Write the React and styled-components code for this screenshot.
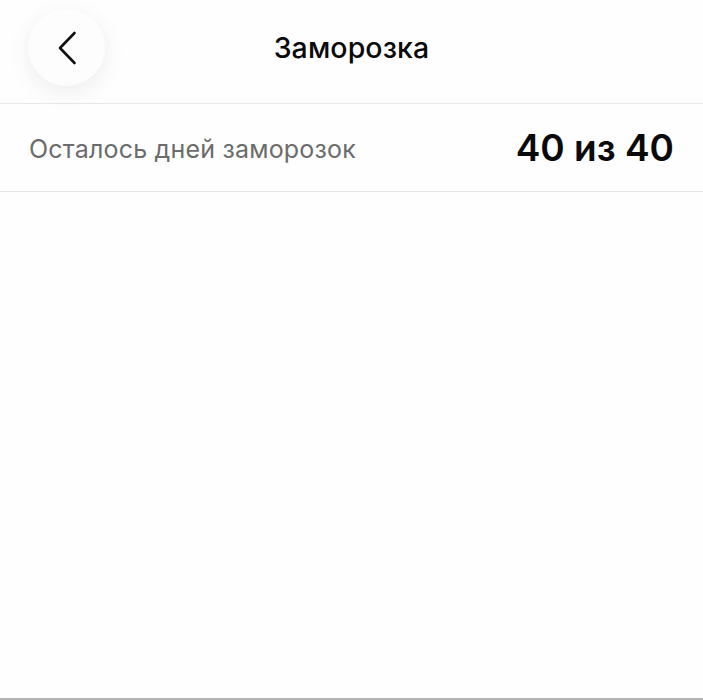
import React from 'react';
import styled, {createGlobalStyle} from 'styled-components';

const Global = createGlobalStyle`
    html, body {
        margin: 0;
        padding: 0;
        background: #fefefe;
    }
    body {
        font-family: Inter, "Noto Sans", Roboto, sans-serif;
        -webkit-font-smoothing: antialiased;
    }
`;

const Page = styled.div`
    height: 700px;
    box-sizing: border-box;
    border-bottom: 2px solid #b4b4b4;
    display: flex;
    flex-direction: column;
`;

const Header = styled.div`
    height: 104px;
    box-sizing: border-box;
    border-bottom: 1.5px solid #e8e8e8;
    display: grid;
    grid-template-columns: 1fr auto 1fr;
    align-items: center;
    padding: 0 28px;
    padding-bottom: 8px;
`;

const BackButton = styled.button`
    width: 77px;
    height: 77px;
    border-radius: 50%;
    border: none;
    background: #fdfdfd;
    box-shadow: 0 6px 24px rgba(0, 0, 0, 0.07);
    display: flex;
    align-items: center;
    justify-content: center;
    padding: 0;
    cursor: pointer;
    justify-self: start;
`;

const Title = styled.div`
    font-size: 28.5px;
    font-weight: 500;
    color: #0a0a0a;
    letter-spacing: 0.1px;
`;

const Row = styled.div`
    height: 88px;
    box-sizing: border-box;
    border-bottom: 1.5px solid #e6e6e6;
    display: flex;
    align-items: center;
    justify-content: space-between;
    padding: 0 29px;
`;

const Label = styled.div`
    font-size: 25px;
    color: #6b6b6b;
    letter-spacing: 0.2px;
    margin-top: 2px;
`;

const Value = styled.div`
    font-size: 37px;
    font-weight: 600;
    color: #0a0a0a;
`;

const Chevron = () => (
    <svg width="20" height="34" viewBox="0 0 20 34" fill="none">
        <path d="M17.5 2 L3 17 L17.5 32" stroke="#111" strokeWidth="2.6" strokeLinecap="round" strokeLinejoin="round"/>
    </svg>
);

const App = () => {
    const left = 40;
    const total = 40;
    return (
        <Page>
            <Global/>
            <Header>
                <BackButton aria-label="Назад">
                    <Chevron/>
                </BackButton>
                <Title>Заморозка</Title>
                <div/>
            </Header>
            <Row>
                <Label>Осталось дней заморозок</Label>
                <Value>{left} из {total}</Value>
            </Row>
        </Page>
    );
};

export default App;
